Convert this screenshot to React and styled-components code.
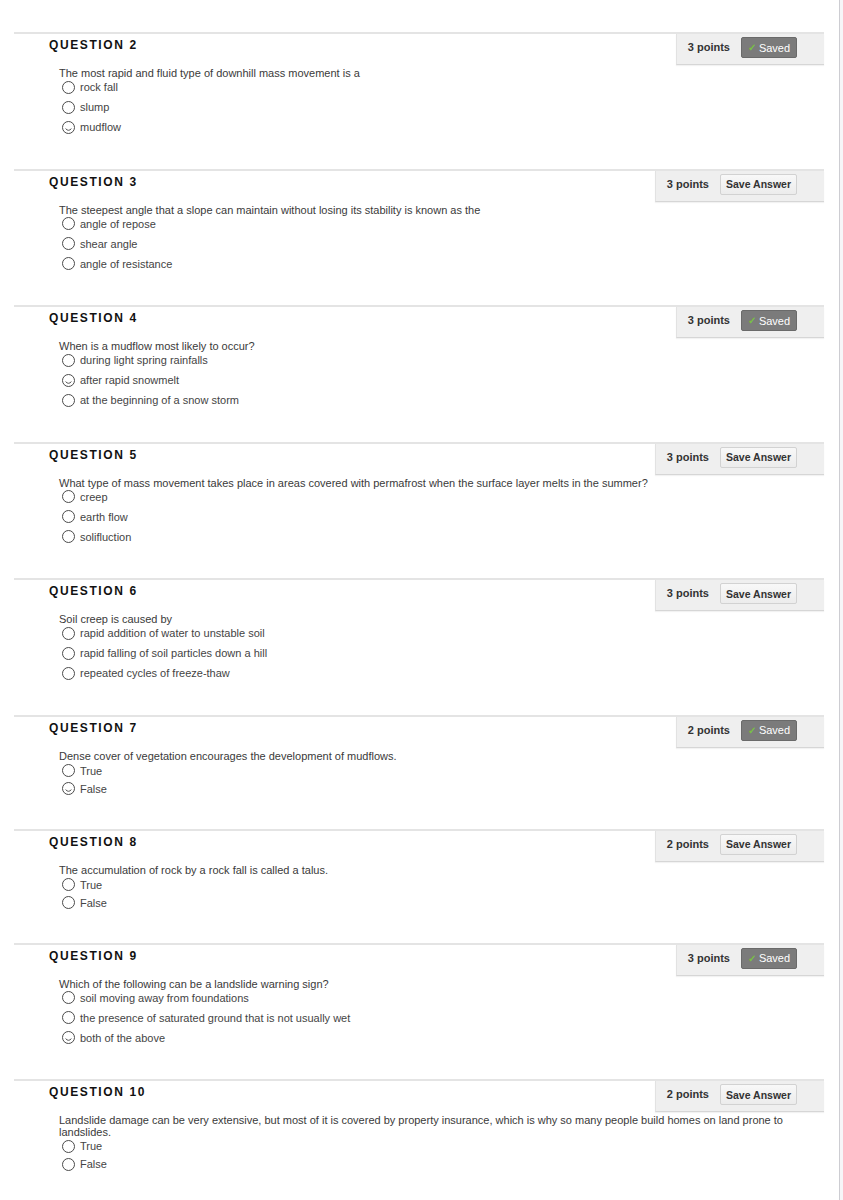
import React from "react";
import styled, { createGlobalStyle } from "styled-components";

const GlobalStyle = createGlobalStyle`
  html, body { margin: 0; padding: 0; background: #fff; }
  body { font-family: "Liberation Sans", Arial, Helvetica, sans-serif; }
`;

const Page = styled.div`
  display: flex;
  width: 843px;
  min-height: 1200px;
  overflow: hidden;
`;

const Main = styled.main`
  width: 839px;
  flex: none;
  padding-top: 32px;
  box-sizing: border-box;
`;

const ScrollTrack = styled.div`
  flex: 1;
  border-left: 1px solid #cdcdd2;
  background: #f6f6f8;
`;

const Block = styled.section`
  margin-left: 14px;
  width: 810px;
  border-top: 2px solid #e4e4e4;
  padding-bottom: ${(p) => (p.$compact ? "33px" : "34.5px")};
`;

const Header = styled.div`
  display: flex;
  justify-content: space-between;
  align-items: flex-start;
`;

const Title = styled.h3`
  margin: 0;
  padding: 4px 0 0 35px;
  font-size: 12px;
  line-height: 14px;
  font-weight: 700;
  letter-spacing: 1.6px;
  color: #111;
`;

const PointsPanel = styled.div`
  display: flex;
  align-items: flex-start;
  gap: 11px;
  height: 31px;
  box-sizing: border-box;
  padding: 3px 27px 0 11px;
  background: #efefef;
  border-left: 1px solid #e2e2e2;
  border-bottom: 1px solid #d6d6d6;
  box-shadow: 0 1px 1px rgba(0, 0, 0, 0.05);
`;

const Points = styled.span`
  font-size: 11px;
  line-height: 21px;
  font-weight: 700;
  color: #333;
`;

const SavedButton = styled.button`
  display: flex;
  align-items: center;
  justify-content: center;
  gap: 3px;
  width: 56px;
  height: 21px;
  padding: 0;
  border: 1px solid #6a6a6a;
  border-radius: 2px;
  background: #7b7b7b;
  color: #fff;
  font-family: inherit;
  font-size: 11px;
  cursor: default;
`;

const Check = styled.span`
  color: #79c043;
  font-size: 10px;
  font-weight: 700;
`;

const SaveButton = styled.button`
  width: 77px;
  height: 21px;
  padding: 0;
  border: 1px solid #d2d2d2;
  border-radius: 2px;
  background: linear-gradient(#f8f8f8, #ececec);
  color: #333;
  font-family: inherit;
  font-size: 10.5px;
  font-weight: 700;
  cursor: default;
`;

const Body = styled.div`
  padding: 2px 30px 0 45px;
`;

const Prompt = styled.p`
  margin: 0;
  font-size: 11px;
  line-height: ${(p) => (p.$multi ? "12px" : "13px")};
  color: #3a3a3a;
`;

const Options = styled.ul`
  list-style: none;
  margin: 0;
  padding: ${(p) => (p.$compact ? "1px" : "0")} 0 0 3px;
  display: flex;
  flex-direction: column;
  gap: ${(p) => (p.$compact ? "4px" : "6px")};
`;

const Option = styled.li`
  display: flex;
  align-items: center;
  gap: 5px;
  height: 14px;
  font-size: 11px;
  color: #444;
`;

const RadioSvg = styled.svg`
  flex: none;
  display: block;
`;

function Radio({ checked }) {
  return (
    <RadioSvg width="13" height="13" viewBox="0 0 13 13">
      <circle cx="6.5" cy="6.5" r="6" fill="#fff" stroke="#4a4a4a" strokeWidth="1" />
      {checked && (
        <path d="M3.6 7.6 Q6.5 11 9.4 7.6" fill="none" stroke="#555" strokeWidth="1" />
      )}
    </RadioSvg>
  );
}

const questions = [
  {
    n: 2, pts: 3, saved: true,
    text: "The most rapid and fluid type of downhill mass movement is a",
    options: ["rock fall", "slump", "mudflow"], sel: 2,
  },
  {
    n: 3, pts: 3, saved: false,
    text: "The steepest angle that a slope can maintain without losing its stability is known as the",
    options: ["angle of repose", "shear angle", "angle of resistance"], sel: -1,
  },
  {
    n: 4, pts: 3, saved: true,
    text: "When is a mudflow most likely to occur?",
    options: ["during light spring rainfalls", "after rapid snowmelt", "at the beginning of a snow storm"], sel: 1,
  },
  {
    n: 5, pts: 3, saved: false,
    text: "What type of mass movement takes place in areas covered with permafrost when the surface layer melts in the summer?",
    options: ["creep", "earth flow", "solifluction"], sel: -1,
  },
  {
    n: 6, pts: 3, saved: false,
    text: "Soil creep is caused by",
    options: ["rapid addition of water to unstable soil", "rapid falling of soil particles down a hill", "repeated cycles of freeze-thaw"], sel: -1,
  },
  {
    n: 7, pts: 2, saved: true,
    text: "Dense cover of vegetation encourages the development of mudflows.",
    options: ["True", "False"], sel: 1,
  },
  {
    n: 8, pts: 2, saved: false,
    text: "The accumulation of rock by a rock fall is called a talus.",
    options: ["True", "False"], sel: -1,
  },
  {
    n: 9, pts: 3, saved: true,
    text: "Which of the following can be a landslide warning sign?",
    options: ["soil moving away from foundations", "the presence of saturated ground that is not usually wet", "both of the above"], sel: 2,
  },
  {
    n: 10, pts: 2, saved: false, multi: true,
    text: "Landslide damage can be very extensive, but most of it is covered by property insurance, which is why so many people build homes on land prone to landslides.",
    options: ["True", "False"], sel: -1,
  },
];

function Question({ q }) {
  const compact = q.options.length === 2;
  return (
    <Block $compact={compact}>
      <Header>
        <Title>QUESTION {q.n}</Title>
        <PointsPanel>
          <Points>{q.pts} points</Points>
          {q.saved ? (
            <SavedButton>
              <Check>✓</Check>Saved
            </SavedButton>
          ) : (
            <SaveButton>Save Answer</SaveButton>
          )}
        </PointsPanel>
      </Header>
      <Body>
        <Prompt $multi={q.multi}>{q.text}</Prompt>
        <Options $compact={compact}>
          {q.options.map((o, i) => (
            <Option key={o}>
              <Radio checked={i === q.sel} />
              {o}
            </Option>
          ))}
        </Options>
      </Body>
    </Block>
  );
}

export default function App() {
  return (
    <>
      <GlobalStyle />
      <Page>
        <Main>
          {questions.map((q) => (
            <Question key={q.n} q={q} />
          ))}
        </Main>
        <ScrollTrack />
      </Page>
    </>
  );
}
